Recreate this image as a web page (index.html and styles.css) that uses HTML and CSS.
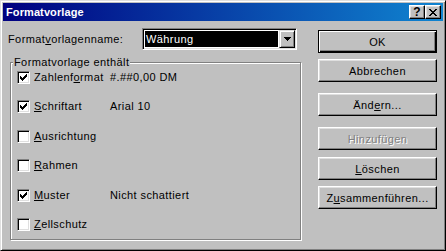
FILE: index.html
```html
<!DOCTYPE html>
<html lang="de">
<head>
  <meta charset="UTF-8">
  <title>Formatvorlage</title>
  <link rel="stylesheet" href="styles.css">
</head>
<body>
  <div class="window">
    <!-- Title bar -->
    <div class="titlebar">
      <span class="title">Formatvorlage</span>
      <div class="caption-buttons">
        <button class="cap-btn help">?</button>
        <button class="cap-btn close">
          <svg width="8" height="7" viewBox="0 0 8 7" shape-rendering="crispEdges"><path d="M0 0h2v1h-2z M6 0h2v1h-2z M1 1h2v1h-2z M5 1h2v1h-2z M2 2h4v1h-4z M3 3h2v1h-2z M2 4h4v1h-4z M1 5h2v1h-2z M5 5h2v1h-2z M0 6h2v1h-2z M6 6h2v1h-2z"/></svg>
        </button>
      </div>
    </div>

    <div class="dialog-body">
      <div class="left-col">
        <div class="name-row">
          <label class="name-label">Format<u>v</u>orlagenname:</label>
          <div class="combo">
            <span class="combo-value">Währung</span>
            <span class="combo-arrow">
              <svg width="7" height="4" viewBox="0 0 7 4" shape-rendering="crispEdges"><path d="M0 0h7v1h-7z M1 1h5v1h-5z M2 2h3v1h-3z M3 3h1v1h-1z"/></svg>
            </span>
          </div>
        </div>

        <!-- Group box -->
        <fieldset class="group">
          <legend>Formatvorlage enthält</legend>
          <div class="options">
            <div class="option-row">
              <span class="check checked"><svg width="11" height="11" viewBox="0 0 11 11" shape-rendering="crispEdges"><path d="M2 4h1v3h-1z M3 5h1v3h-1z M4 6h1v3h-1z M5 5h1v3h-1z M6 4h1v3h-1z M7 3h1v3h-1z M8 2h1v3h-1z"/></svg></span>
              <span class="opt-label">Zahlenf<u>o</u>rmat</span>
              <span class="opt-value">#.##0,00 DM</span>
            </div>
            <div class="option-row">
              <span class="check checked"><svg width="11" height="11" viewBox="0 0 11 11" shape-rendering="crispEdges"><path d="M2 4h1v3h-1z M3 5h1v3h-1z M4 6h1v3h-1z M5 5h1v3h-1z M6 4h1v3h-1z M7 3h1v3h-1z M8 2h1v3h-1z"/></svg></span>
              <span class="opt-label"><u>S</u>chriftart</span>
              <span class="opt-value">Arial 10</span>
            </div>
            <div class="option-row">
              <span class="check"></span>
              <span class="opt-label"><u>A</u>usrichtung</span>
              <span class="opt-value"></span>
            </div>
            <div class="option-row">
              <span class="check"></span>
              <span class="opt-label"><u>R</u>ahmen</span>
              <span class="opt-value"></span>
            </div>
            <div class="option-row">
              <span class="check checked"><svg width="11" height="11" viewBox="0 0 11 11" shape-rendering="crispEdges"><path d="M2 4h1v3h-1z M3 5h1v3h-1z M4 6h1v3h-1z M5 5h1v3h-1z M6 4h1v3h-1z M7 3h1v3h-1z M8 2h1v3h-1z"/></svg></span>
              <span class="opt-label"><u>M</u>uster</span>
              <span class="opt-value">Nicht schattiert</span>
            </div>
            <div class="option-row">
              <span class="check"></span>
              <span class="opt-label"><u>Z</u>ellschutz</span>
              <span class="opt-value"></span>
            </div>
          </div>
        </fieldset>
      </div>

      <!-- Command buttons -->
      <div class="button-col">
        <button class="btn default">OK</button>
        <button class="btn btn-cancel">Abbrechen</button>
        <button class="btn btn-edit">Änd<u>e</u>rn...</button>
        <button class="btn btn-add" disabled>Hinzufügen</button>
        <button class="btn btn-delete"><u>L</u>öschen</button>
        <button class="btn btn-merge">Z<u>u</u>sammenführen...</button>
      </div>
    </div>
  </div>
</body>
</html>
```

FILE: styles.css
```css
/* General Styling */
* {
  box-sizing: border-box;
}

body {
  margin: 0;
  font-family: "Liberation Sans", Arial, sans-serif;
  font-size: 11px;
  letter-spacing: 0.4px;
  color: #000;
  background: #c0c0c0;
}

.window {
  width: 446px;
  height: 251px;
  padding: 2px;
  background: #c0c0c0;
  border: 1px solid;
  border-color: #dfdfdf #000 #000 #dfdfdf;
  box-shadow: inset 1px 1px 0 #fff, inset -1px -1px 0 #808080;
}

/* Title Bar */
.titlebar {
  height: 18px;
  display: flex;
  align-items: center;
  justify-content: space-between;
  padding: 0 2px 0 3px;
  background: linear-gradient(to right, #000080, #1084d0);
}

.title {
  color: #fff;
  font-weight: bold;
  font-size: 11px;
  letter-spacing: 0.1px;
}

.caption-buttons {
  display: flex;
}

.cap-btn {
  width: 16px;
  height: 14px;
  padding: 0;
  display: flex;
  align-items: center;
  justify-content: center;
  background: #c0c0c0;
  border: 1px solid;
  border-color: #fff #000 #000 #fff;
  box-shadow: inset -1px -1px 0 #808080, inset 1px 1px 0 #dfdfdf;
  font-family: "Liberation Sans", Arial, sans-serif;
  font-size: 12px;
  font-weight: bold;
  line-height: 11px;
  letter-spacing: 0;
  color: #000;
}

/* Dialog Body */
.dialog-body {
  display: flex;
}

.left-col {
  width: 315px;
  padding-left: 5px;
}

.name-row {
  display: flex;
  align-items: center;
  margin-top: 7px;
}

.name-label {
  width: 134px;
}

.combo {
  width: 155px;
  height: 22px;
  padding: 1px;
  display: flex;
  background: #fff;
  border: 1px solid;
  border-color: #808080 #fff #fff #808080;
  box-shadow: inset 1px 1px 0 #000, inset -1px -1px 0 #dfdfdf;
}

.combo-value {
  flex: 1;
  margin: 1px;
  padding-left: 1px;
  background: #000;
  color: #fff;
  line-height: 16px;
}

.combo-arrow {
  width: 16px;
  display: flex;
  align-items: center;
  justify-content: center;
  background: #c0c0c0;
  border: 1px solid;
  border-color: #dfdfdf #000 #000 #dfdfdf;
  box-shadow: inset 1px 1px 0 #fff, inset -1px -1px 0 #808080;
}

/* Group Box */
.group {
  width: 291px;
  height: 184px;
  margin: 6px 0 0 2px;
  padding: 2px 0 0 2px;
  border: 1px solid #808080;
  box-shadow: 1px 1px 0 #fff, inset 1px 1px 0 #fff;
}

.group legend {
  padding: 0 1px;
  line-height: 13px;
  background: #c0c0c0;
}

.options {
  display: grid;
  grid-auto-rows: 13px;
  row-gap: 16.4px;
  padding-left: 4px;
}

.option-row {
  display: grid;
  grid-template-columns: 13px 72px auto;
  column-gap: 4px;
  align-items: center;
  line-height: 13px;
}

.check {
  width: 13px;
  height: 13px;
  background: #fff;
  border: 1px solid;
  border-color: #808080 #fff #fff #808080;
  box-shadow: inset 1px 1px 0 #000, inset -1px -1px 0 #dfdfdf;
}

.check svg {
  display: block;
}

/* Command Buttons */
.button-col {
  width: 119px;
  padding-top: 9px;
  display: flex;
  flex-direction: column;
}

.btn {
  width: 119px;
  height: 23px;
  padding: 0;
  font-family: inherit;
  font-size: 11px;
  letter-spacing: 0.4px;
  color: #000;
  background: #c0c0c0;
  border: 1px solid;
  border-color: #fff #000 #000 #fff;
  box-shadow: inset -1px -1px 0 #808080, inset 1px 1px 0 #dfdfdf;
}

.btn.default {
  border-color: #000;
  box-shadow: inset 1px 1px 0 #fff, inset -1px -1px 0 #000, inset -2px -2px 0 #808080;
}

.btn-cancel {
  margin-top: 6px;
}

.btn-edit,
.btn-add {
  margin-top: 11px;
}

.btn-delete {
  margin-top: 7px;
}

.btn-merge {
  margin-top: 6px;
}

.btn:disabled {
  color: #808080;
  text-shadow: 1px 1px 0 #fff;
}
```
